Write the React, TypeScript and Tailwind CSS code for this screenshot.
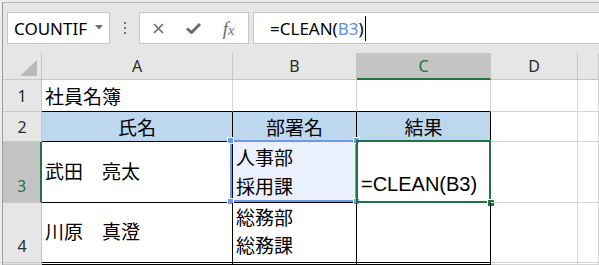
import React from "react";

const CJK = "font-['Noto_Sans_CJK_JP',sans-serif]";
const UI = "font-['Noto_Sans',sans-serif]";

function Cell({
  className = "",
  children,
}: {
  className?: string;
  children?: React.ReactNode;
}) {
  return <div className={`relative border-r border-b ${className}`}>{children}</div>;
}

export default function App() {
  const hdr = `flex items-center justify-center border-r border-b border-[#c6c6c6] bg-[#e6e6e6] text-[16px] text-[#2b2b2b] ${UI}`;
  const rowHdr = `flex justify-center border-r border-b border-[#c6c6c6] bg-[#e6e6e6] text-[16px] text-[#2b2b2b] ${UI}`;
  const grid = "border-[#d4d4d4]";
  const blk = "border-black";
  const txt = `text-[19px] leading-[29px] text-black ${CJK}`;

  return (
    <div className="w-[599px] h-[265px] overflow-hidden bg-[#ececec] pl-[2px] pt-[2px]">
      <div className="h-full border-l border-t border-l-[#9a9a9a] border-t-[#b4b4b4] bg-[#e6e6e6] flex flex-col">
        {/* Toolbar */}
        <div className="h-[50px] shrink-0 flex items-start pt-[9px] pl-[4px]">
          <div className="w-[103px] h-[32px] shrink-0 bg-white border border-[#c6c6c6] flex items-center pl-[6px] pr-[6px]">
            <span className={`text-[17px] text-black ${UI} flex-1 leading-none`}>COUNTIF</span>
            <svg width="8" height="5" viewBox="0 0 8 5" className="mb-[1px]">
              <polygon points="0,0 8,0 4,4.5" fill="#6b6b6b" />
            </svg>
          </div>
          <div className="w-[29px] h-[32px] shrink-0 flex flex-col items-center justify-center gap-[3px] pl-[1px]">
            <div className="w-[2px] h-[2px] bg-[#707070]" />
            <div className="w-[2px] h-[2px] bg-[#707070]" />
            <div className="w-[2px] h-[2px] bg-[#707070]" />
          </div>
          <div className="w-[110px] h-[32px] shrink-0 bg-white border border-[#c6c6c6] flex items-center px-[1px]">
            <div className="w-[35px] flex justify-center">
              <svg width="11" height="11" viewBox="0 0 11 11">
                <path d="M1 1 L10 10 M10 1 L1 10" stroke="#6b6b6b" strokeWidth="1.6" fill="none" />
              </svg>
            </div>
            <div className="w-[35px] flex justify-center">
              <svg width="15" height="11" viewBox="0 0 15 11">
                <path d="M1 5.5 L5.5 9.5 L14 1" stroke="#6b6b6b" strokeWidth="3" fill="none" />
              </svg>
            </div>
            <div className="w-[35px] flex justify-center">
              <span className="font-['Liberation_Serif',serif] italic text-[19px] leading-none text-[#6b6b6b]">
                f<span className="text-[14px]">x</span>
              </span>
            </div>
          </div>
          <div className="ml-[4px] w-[420px] h-[32px] shrink-0 bg-white border border-[#c6c6c6] flex items-center pl-[16px]">
            <span className={`text-[17px] leading-none text-black ${UI}`}>
              =CLEAN(<span className="text-[#5b8ee6]">B3</span>)
            </span>
            <div className="ml-[1px] w-px h-[25px] bg-black" />
          </div>
        </div>

        {/* Sheet grid */}
        <div className="flex-1 grid grid-cols-[39px_191px_124px_134px_87px_1fr] grid-rows-[27px_32px_30px_61px_60px_1fr] bg-white">
          {/* Header row */}
          <div className="flex items-end justify-end pr-[3px] pb-[2px] border-r border-b border-[#c6c6c6] bg-[#e6e6e6]">
            <svg width="18" height="17" viewBox="0 0 18 17">
              <polygon points="17,0 0,16 17,16" fill="#b9b9b9" />
            </svg>
          </div>
          <div className={hdr}>A</div>
          <div className={hdr}>B</div>
          <div className={`${hdr} !border-b-2 !border-b-[#217346] !bg-[#c4c4c4] !text-[#217346]`}>C</div>
          <div className={hdr}>D</div>
          <div className={hdr}></div>

          {/* Row 1 */}
          <div className={`${rowHdr} items-center`}>1</div>
          <Cell className={`${grid} !border-b-black flex items-end pl-[3px] pb-[1px] ${txt}`}>社員名簿</Cell>
          <Cell className={`${grid} !border-b-black`} />
          <Cell className={`${grid} !border-b-black`} />
          <Cell className={grid} />
          <Cell className={grid} />

          {/* Row 2 */}
          <div className={`${rowHdr} items-center`}>2</div>
          <Cell className={`${blk} bg-[#bdd7ee] flex items-center justify-center ${txt}`}>氏名</Cell>
          <Cell className={`${blk} bg-[#bdd7ee] flex items-center justify-center ${txt}`}>部署名</Cell>
          <Cell className={`${blk} bg-[#bdd7ee] flex items-center justify-center ${txt}`}>結果</Cell>
          <Cell className={grid} />
          <Cell className={grid} />

          {/* Row 3 */}
          <div className={`${rowHdr} items-end pb-[4px] !border-r-2 !border-r-[#217346] !bg-[#c4c4c4] !text-[#217346]`}>3</div>
          <Cell className={`${blk} flex items-center pl-[3px] pb-[3px] ${txt}`}>武田　亮太</Cell>
          <Cell className={`${blk} bg-[#ebf1fc] pl-[3px] ${txt}`}>
            <div>人事部</div>
            <div>採用課</div>
            <div className="absolute left-[-3px] top-[-2px] right-[-1px] bottom-0 border-2 border-[#6e98e8]" />
            <div className="absolute left-[-5px] top-[-4px] w-[5px] h-[5px] bg-[#6e98e8] outline outline-1 outline-white" />
            <div className="absolute right-[-3px] top-[-4px] w-[5px] h-[5px] bg-[#6e98e8] outline outline-1 outline-white" />
            <div className="absolute left-[-5px] bottom-[-2px] w-[5px] h-[5px] bg-[#6e98e8] outline outline-1 outline-white" />
            <div className="absolute right-[-3px] bottom-[-2px] w-[5px] h-[5px] bg-[#6e98e8] outline outline-1 outline-white" />
          </Cell>
          <Cell className={`${blk} flex items-end pl-[4px] pb-[3px] text-[20px] leading-[29px] text-black font-['Liberation_Sans',sans-serif]`}>
            =CLEAN(B3)
            <div className="absolute left-[-1px] top-[-2px] right-[-1px] bottom-[-1px] border-2 border-[#217346]" />
            <div className="absolute right-[-4px] bottom-[-4px] w-[6px] h-[6px] bg-[#217346] outline outline-1 outline-white" />
          </Cell>
          <Cell className={grid} />
          <Cell className={grid} />

          {/* Row 4 */}
          <div className={`${rowHdr} items-end pb-[4px]`}>4</div>
          <Cell className={`${blk} flex items-center pl-[3px] pb-[4px] ${txt}`}>川原　真澄</Cell>
          <Cell className={`${blk} pl-[3px] text-[19px] leading-[28px] text-black ${CJK}`}>
            <div>総務部</div>
            <div>総務課</div>
          </Cell>
          <Cell className={blk} />
          <Cell className={grid} />
          <Cell className={grid} />

          {/* Row 5 */}
          <div className={rowHdr}></div>
          <Cell className={blk} />
          <Cell className={blk} />
          <Cell className={blk} />
          <Cell className={grid} />
          <Cell className={grid} />
        </div>
      </div>
    </div>
  );
}
